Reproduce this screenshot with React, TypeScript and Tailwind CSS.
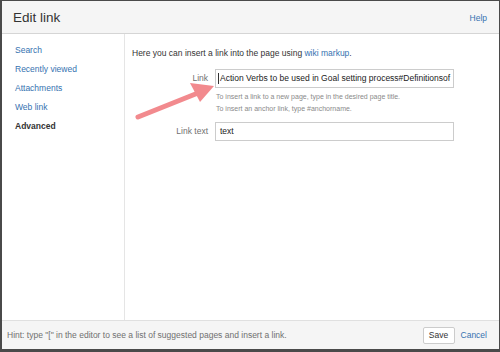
import React from 'react';

const font = { fontFamily: '"Liberation Sans", Arial, sans-serif' };

const navItems = ['Search', 'Recently viewed', 'Attachments', 'Web link'];

const Arrow: React.FC = () => (
  <svg className="absolute left-0 top-0 pointer-events-none" width="500" height="352" viewBox="0 0 500 352">
    <line x1="138" y1="117" x2="198" y2="93" stroke="#f28a8e" strokeWidth="5" strokeLinecap="round" />
    <polygon points="214,86 190,83 200,102" fill="#f28a8e" />
  </svg>
);

export default function App() {
  return (
    <div className="relative w-[500px] h-[352px] bg-[#4a4a4a] pt-px pl-[2px] pr-px pb-[3px] overflow-hidden" style={font}>
      <div className="flex flex-col h-full bg-white">
        {/* header */}
        <div className="flex items-center justify-between h-[33px] bg-[#f5f5f5] border-b border-[#d5d5d5] pt-[3px] pl-[11px] pr-[12px]">
          <span className="text-[13.5px] text-[#333]">Edit link</span>
          <span className="text-[8.5px] text-[#3572b0]">Help</span>
        </div>

        {/* body */}
        <div className="flex flex-1 min-h-0">
          <div className="w-[123px] border-r border-[#e5e5e5] pt-[7px] pl-[13px] flex flex-col">
            {navItems.map((item) => (
              <div key={item} className="h-[19px] flex items-center text-[8.5px] text-[#3572b0]">
                {item}
              </div>
            ))}
            <div className="h-[19px] flex items-center text-[8.5px] font-bold text-[#333]">Advanced</div>
          </div>

          <div className="flex-1 pt-[13px] pl-[7px]">
            <p className="text-[8.5px] text-[#333] leading-[12px]">
              Here you can insert a link into the page using <span className="text-[#3572b0]">wiki markup</span>.
            </p>
            <div className="flex items-center mt-[10px]">
              <div className="w-[83px] pr-[7px] text-right text-[8.5px] text-[#707070]">Link</div>
              <div className="w-[239px] h-[19px] border border-[#ccc] flex items-center pl-[2px] text-[8.5px] text-[#222] whitespace-nowrap overflow-hidden">
                <span className="w-px h-[11px] bg-[#333] mr-px" />
                Action Verbs to be used in Goal setting process#Definitionsof
              </div>
            </div>
            <div className="ml-[84px] mt-[3px] text-[7px] text-[#8a8a8a] leading-[12px]">
              <div>To insert a link to a new page, type in the desired page title.</div>
              <div>To insert an anchor link, type #anchorname.</div>
            </div>
            <div className="flex items-center mt-[7px]">
              <div className="w-[83px] pr-[7px] text-right text-[8.5px] text-[#707070]">Link text</div>
              <div className="w-[239px] h-[19px] border border-[#ccc] flex items-center pl-[4px] text-[8.5px] text-[#222]">
                text
              </div>
            </div>
          </div>
        </div>

        {/* footer */}
        <div className="flex items-center justify-between h-[29px] bg-[#f5f5f5] border-t border-[#e0e0e0] pl-[5px] pr-[12px]">
          <span className="text-[8.5px] text-[#707070]">
            Hint: type "[" in the editor to see a list of suggested pages and insert a link.
          </span>
          <div className="flex items-center gap-[6px]">
            <div className="h-[17px] w-[32px] justify-center flex items-center bg-white border border-[#ccc] rounded-[2px] text-[8.5px] text-[#333]">
              Save
            </div>
            <span className="text-[8.5px] text-[#3572b0]">Cancel</span>
          </div>
        </div>
      </div>
      <Arrow />
    </div>
  );
}
